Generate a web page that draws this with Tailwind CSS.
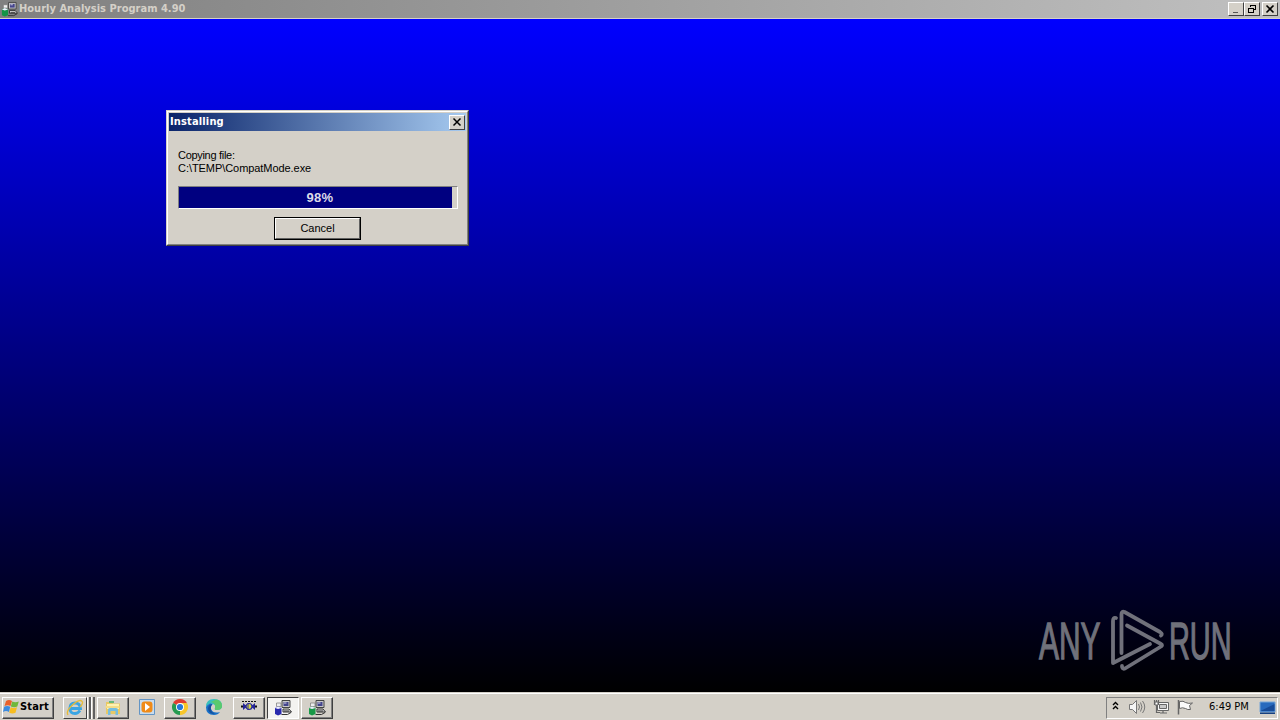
<!DOCTYPE html>
<html lang="en">
  <head>
    <meta charset="UTF-8" />
    <meta name="viewport" content="width=device-width, initial-scale=1.0" />
    <title>Hourly Analysis Program 4.90</title>
    <script src="https://cdn.jsdelivr.net/npm/@tailwindcss/browser@4"></script>
  </head>
  <body class="w-[1280px] h-[720px] overflow-hidden flex flex-col bg-black text-black text-[11px] font-['DejaVu_Sans_Condensed','DejaVu_Sans',sans-serif]">
    <!-- Shared installer icon -->
    <svg class="hidden">
      <symbol id="setup" viewBox="0 0 18 18">
        <path d="M8 1.500h8v7H8z" fill="#c9c9c9" stroke="#444" />
        <path d="M9.500 3h5v4h-5z" fill="#44448c" />
        <path d="M10 3.500h2.500v1H10z" fill="#d8d8e8" />
        <path d="M9 10h6l2.500 3H9z" fill="#ddd" stroke="#333" />
        <path d="M10 12h5M7.500 15.500h6l3.500-2" fill="none" stroke="#333" />
        <path d="M2.500 4h4.500v3.500H2.500z" fill="#eee" stroke="#777" stroke-width=".7" />
        <path d="M1 9l3-1.500L7.500 9V15L4 16.500 1 15z" fill="currentColor" />
        <path d="M1 9l3 1 3.500-1L4 7.500z" fill="#eef" />
      </symbol>
    </svg>

    <!-- Main window title bar -->
    <header class="h-[19px] shrink-0 flex items-center justify-between border-b border-[#d4d0c8] bg-linear-to-r from-[#808080] to-[#c0c0c0] pl-px pr-[2px]">
      <div class="flex items-center gap-px">
        <svg class="size-[17px] text-[#159447]"><use href="#setup" /></svg>
        <h1 class="font-bold text-[#d4d0c8] leading-[18px] whitespace-nowrap tracking-[0.02px]">Hourly Analysis Program 4.90</h1>
      </div>
      <div class="flex">
        <button class="w-4 h-[14px] bg-[#d4d0c8] border border-t-white border-l-white border-r-[#404040] border-b-[#404040]">
          <svg class="w-[14px] h-3" viewBox="0 0 14 12"><path d="M4 9h5v1H4z" fill="#555" /></svg>
        </button>
        <button class="w-4 h-[14px] bg-[#d4d0c8] border border-t-white border-l-white border-r-[#404040] border-b-[#404040]">
          <svg class="w-[14px] h-3" viewBox="0 0 14 12" fill="none" stroke="#000" shape-rendering="crispEdges"><path d="M5.500 4V2.500h5v4H9M5 2h6M3.500 5.500h5v4h-5zM3 5h6" /></svg>
        </button>
        <button class="ml-[2px] w-4 h-[14px] bg-[#d4d0c8] border border-t-white border-l-white border-r-[#404040] border-b-[#404040]">
          <svg class="w-[14px] h-3" viewBox="0 0 14 12"><path d="M3.500 2.500l7 7M10.500 2.500l-7 7" stroke="#000" stroke-width="1.600" /></svg>
        </button>
      </div>
    </header>

    <main class="relative h-[673px] shrink-0 bg-linear-to-b/srgb from-[#0000ff] to-black">
      <!-- Progress dialog -->
      <section class="absolute left-[166px] top-[91px] w-[303px] h-[136px] flex flex-col bg-[#d4d0c8] border border-t-[#d4d0c8] border-l-[#d4d0c8] border-r-[#404040] border-b-[#404040]">
        <div class="grow flex flex-col border border-t-white border-l-white border-r-[#808080] border-b-[#808080] p-px">
          <div class="h-[18px] flex items-center justify-between bg-linear-to-r/srgb from-[#0a246a] to-[#a6caf0] pl-[1px] pr-[1px]">
            <h2 class="font-bold text-white tracking-[0.15px] leading-[18px]">Installing</h2>
            <button class="w-4 h-[15px] flex items-center bg-[#d4d0c8] border border-t-white border-l-white border-r-[#404040] border-b-[#404040]">
              <svg class="w-[14px] h-3" viewBox="0 0 14 12"><path d="M3.500 2.500l7 7M10.500 2.500l-7 7" stroke="#000" stroke-width="1.500" /></svg>
            </button>
          </div>
          <div class="flex flex-col pl-[9px] pr-2 pt-[18px] font-['Liberation_Sans',sans-serif]">
            <p class="leading-[13px] tracking-[-0.3px]">Copying file:</p>
            <p class="leading-[13px] tracking-[-0.06px]">C:\TEMP\CompatMode.exe</p>
            <div class="mt-[11px] h-[23px] border border-t-[#808080] border-l-[#808080] border-r-white border-b-white relative">
              <div class="h-full bg-[#000080]" style="width: 98.200%"></div>
              <span class="absolute inset-0 pl-[4px] text-center text-[#dcdce8] text-[13px] tracking-[0.3px] leading-[21px] font-bold">98%</span>
            </div>
            <button class="mt-2 ml-[-1px] self-center w-[87px] h-[23px] border border-black bg-[#d4d0c8]">
              <span class="block h-[21px] border border-t-white border-l-white border-r-[#606060] border-b-[#606060] leading-[19px] text-[11px]">Cancel</span>
            </button>
          </div>
        </div>
      </section>

      <!-- Watermark -->
      <svg class="absolute left-[1030px] top-[581px] w-[210px] h-20" viewBox="0 0 210 80" fill="none" stroke="#70717b" font-family="Liberation Sans Narrow, Liberation Sans">
        <text transform="translate(9 58.500) scale(.62 1)" textLength="99" lengthAdjust="spacingAndGlyphs" font-size="51" fill="#70717b" stroke-width="1.300">ANY</text>
        <text transform="translate(139 58.500) scale(.62 1)" textLength="101" lengthAdjust="spacingAndGlyphs" font-size="51" fill="#70717b" stroke-width="1.300">RUN</text>
        <g stroke-width="3.800" stroke-linejoin="round" stroke-linecap="round">
          <path d="M86 18q-3-1-3 3V63L120 44" />
          <path d="M91.500 53V14q0-3 3-2L130 32q3 2 1 3.500" />
          <path d="M97 25.500L131 44q2 1 0 2.500L95 68.500q-3 1-3-2.500" />
        </g>
      </svg>
    </main>

    <!-- Taskbar -->
    <footer class="h-7 shrink-0 flex items-center justify-between bg-[#d4d0c8] border-t border-[#d4d0c8] shadow-[inset_0_1px_0_#fff] pt-[2px] pl-[2px] pr-[2px]">
      <div class="flex items-center">
        <button class="w-[52px] h-[22px] flex items-center border border-t-white border-l-white border-r-[#404040] border-b-[#404040] shadow-[inset_-1px_-1px_0_#808080] font-bold">
          <svg class="w-[17px] h-4 mb-px" viewBox="0 0 17 16">
            <path d="M3 2q3-2 6 0L7.500 7Q5 5.500 1.500 7z" fill="#e9602b" />
            <path d="M9.300 2.500q3 1.500 6.500 0l-1.500 5q-3 1.500-6.500 0z" fill="#70b83b" />
            <path d="M1.200 7.700q3-1.500 6 0L6 13q-3-2-6 0z" fill="#3b8be0" />
            <path d="M7.700 8.300q3 1.500 6.300 0l-1.500 5.500q-3 1.500-6.300 0z" fill="#f7bd20" />
          </svg>
          <span class="tracking-[0.15px]">Start</span>
        </button>
        <button class="ml-[9px] w-6 h-[22px] flex items-center justify-center border border-t-white border-l-white border-r-[#404040] border-b-[#404040]">
          <svg class="size-[18px]" viewBox="0 0 18 18" fill="none">
            <path d="M4 9.500h10.500Q14 4 9 4T3.800 9.500Q4 14.500 9 14.500q3 0 5-3" stroke="#3aa5e3" stroke-width="2.800" />
            <path d="M2 16Q-.5 12 7 5.500T16.500 3Q17 5 14 8" stroke="#e6bc38" stroke-width="1.300" />
          </svg>
        </button>
        <span class="w-[4px] h-[22px] border-r-2 border-l border-l-white border-r-[#606060]"></span>
        <span class="w-[4px] h-[22px] border-r-2 border-l border-l-white border-r-[#606060]"></span>
        <button class="ml-[2px] w-8 h-[22px] flex items-center justify-center border border-t-white border-l-white border-r-[#404040] border-b-[#404040] shadow-[inset_-1px_-1px_0_#808080]">
          <svg class="size-[18px]" viewBox="0 0 18 18">
            <path d="M2 3h6l1 1.500h7V15H2z" fill="#e8c965" />
            <path d="M3 5h12v5H3z" fill="#fff2b0" />
            <path d="M5 2h5v2H5z" fill="#67b879" />
            <path d="M4 16v-5q0-2 2-2h6q2 0 2 2v5h-2.500v-4h-5v4z" fill="#75bde0" />
            <path d="M1.500 7h14v2h-14z" fill="#f4dc87" />
          </svg>
        </button>
        <svg class="ml-[9px] size-[18px] mb-px" viewBox="0 0 18 18">
          <path d="M1.500 1.500h15v15h-15z" fill="#c9dced" stroke="#6395c5" />
          <rect x="3.500" y="3.500" width="11" height="11" rx="3" fill="#f08b18" />
          <path d="M7 5l5 4-5 4z" fill="#fff" />
        </svg>
        <button class="ml-[8px] w-8 h-[22px] flex items-center justify-center border border-t-white border-l-white border-r-[#404040] border-b-[#404040] shadow-[inset_-1px_-1px_0_#808080]">
          <svg class="size-4 mb-[2px]" viewBox="0 0 16 16">
            <path d="M8 8L1.070 4a8 8 0 0 1 13.860 0z" fill="#df3d31" />
            <path d="M8 8l6.930-4A8 8 0 0 1 8 16z" fill="#f8c629" />
            <path d="M8 8v8A8 8 0 0 1 1.070 4z" fill="#269b50" />
            <path d="M8 4h6.930L11.500 10 8 16l3.400-6z" fill="#f8c629" />
            <circle cx="8" cy="8" r="4" fill="#fff" />
            <circle cx="8" cy="8" r="3.100" fill="#2478dc" />
          </svg>
        </button>
        <svg class="ml-[9px] size-[18px] mb-[2px]" viewBox="0 0 18 18">
          <path d="M1 9Q1 1 9 1t8 7q0 4-5 4-3 0-2-2 1-3-2-4-4-1-7 3z" fill="#38bfbd" />
          <path d="M11 1.500q6 1 6 6.500 0 4-5 4-3 0-2-2 1-5-4-6z" fill="#5ac96d" />
          <path d="M1 9q3-5 7-3-3 2-2 5 2 5 9 3-2 3-6 3-8 0-8-8z" fill="#176fc7" />
          <path d="M6 9q-1 5 4 7-6 0-7-5 0-4 4-5z" fill="#164f9b" />
        </svg>
        <button class="ml-[10px] w-8 h-[22px] flex items-center justify-center border border-t-white border-l-white border-r-[#404040] border-b-[#404040] shadow-[inset_-1px_-1px_0_#808080]">
          <svg class="size-[18px] mb-[6px]" viewBox="0 0 18 18">
            <path d="M2 5.500h15" stroke="#111" stroke-dasharray="2 1" />
            <path d="M1 10.500h16" stroke="#111" stroke-width="2" />
            <path d="M3 7l4 3.500L3 14zM15 7l-4 3.500 4 3.500z" fill="#23239a" />
            <circle cx="9" cy="10.500" r="3" fill="#d7d83e" stroke="#2929a0" stroke-width="1.200" />
            <path d="M8 7v7" stroke="#2929a0" />
          </svg>
        </button>
        <button class="ml-[2px] w-8 h-[22px] flex items-center justify-center bg-[#f4f3f0] border border-t-[#404040] border-l-[#404040] border-r-white border-b-white text-[#2929ad]">
          <svg class="size-[18px]"><use href="#setup" /></svg>
        </button>
        <button class="ml-[2px] w-8 h-[22px] flex items-center justify-center border border-t-white border-l-white border-r-[#404040] border-b-[#404040] shadow-[inset_-1px_-1px_0_#808080] text-[#189947]">
          <svg class="size-[18px]"><use href="#setup" /></svg>
        </button>
      </div>

      <!-- Notification area -->
      <div class="w-[172px] h-[22px] flex items-center border border-t-[#808080] border-l-[#808080] border-r-white border-b-white">
        <svg class="ml-[5px] mb-[3px] w-2 h-[10px]" viewBox="0 0 8 10" fill="none" stroke="#000" stroke-width="1.400"><path d="M1 4l2.500-2.500L6 4M1 8l2.500-2.500L6 8" /></svg>
        <svg class="ml-[9px] mb-px w-[17px] h-4" viewBox="0 0 17 16" stroke="#777" fill="none">
          <path d="M.5 5.500h3l4-4v13l-4-4h-3z" fill="#f5f5f5" />
          <path d="M9.500 5q2 3 0 6M11.500 3.500q3 4.500 0 9M13.500 2q4.500 6 0 12" />
        </svg>
        <svg class="ml-[7px] mb-px w-[17px] h-4" viewBox="0 0 17 16" stroke="#666" fill="none">
          <path d="M4.500 3.500h11v8h-11z" fill="#f7f7f7" /><path d="M6.500 5.500h7v4h-7z" fill="#c8c8c8" />
          <path d="M1.500 1v4.500h4V1M3.500 1v12.500H7M7 14h7M10 12v2" stroke-width="1.200" />
          <path d="M2 3h3v3H2z" fill="#fff" />
        </svg>
        <svg class="ml-[7px] mb-px w-[17px] h-4" viewBox="0 0 17 16" stroke="#666"><path d="M1.500 1v14.500" stroke-width="1.500" /><path d="M2.500 2.500q4-1 6 1 3 1.500 7 .5l-3 2.500 1 4q-3 .5-5-1-3-1.500-6 0z" fill="#fafafa" /></svg>
        <span class="ml-[15px] w-[42px] whitespace-nowrap">6:49 PM</span>
        <svg class="ml-[8px] w-[17px] h-[14px]" viewBox="0 0 17 14">
          <path d="M1 1h15v10H1z" fill="#286abd" stroke="#75a5d8" />
          <path d="M1.500 10L15.500 3v7z" fill="#174b98" />
          <path d="M1 11.500h15v1.500H1z" fill="#174080" />
        </svg>
      </div>
    </footer>
  </body>
</html>
